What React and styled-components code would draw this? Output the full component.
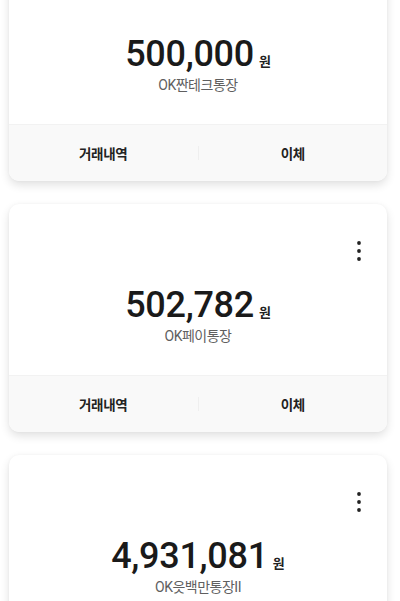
import React from "react";
import styled, { createGlobalStyle } from "styled-components";

const accounts = [
  { amount: "500,000", name: "OK짠테크통장", menu: false },
  { amount: "502,782", name: "OK페이통장", menu: true },
  { amount: "4,931,081", name: "OK읏백만통장II", menu: true },
];

const App = () => {
  return (
    <>
      <GlobalStyle />
      <Page>
        <CardList>
          {accounts.map((acc) => (
            <Card key={acc.name}>
              <CardBody>
                <MenuRow>
                  {acc.menu && (
                    <MenuButton aria-label="더보기">
                      <svg width="6" height="24" viewBox="0 0 6 24">
                        <circle cx="3" cy="4" r="1.9" fill="#222" />
                        <circle cx="3" cy="12" r="1.9" fill="#222" />
                        <circle cx="3" cy="20" r="1.9" fill="#222" />
                      </svg>
                    </MenuButton>
                  )}
                </MenuRow>
                <AmountLine>
                  <Amount>{acc.amount}</Amount>
                  <Won>원</Won>
                </AmountLine>
                <AccountName>{acc.name}</AccountName>
              </CardBody>
              <CardFooter>
                <FooterButton>거래내역</FooterButton>
                <Divider />
                <FooterButton>이체</FooterButton>
              </CardFooter>
            </Card>
          ))}
        </CardList>
      </Page>
    </>
  );
};

export default App;

const GlobalStyle = createGlobalStyle`
  html, body {
    margin: 0;
    padding: 0;
    background: #fff;
    overflow: hidden;
  }
  body {
    font-family: Roboto, "Noto Sans CJK KR", sans-serif;
  }
`;

const Page = styled.div`
  width: 400px;
  height: 601px;
  overflow: hidden;
  background: #fff;
`;

const CardList = styled.div`
  display: flex;
  flex-direction: column;
  gap: 23px;
  margin-top: -47px;
  padding: 0 13px 0 9px;
`;

const Card = styled.div`
  background-color: #fff;
  border-radius: 10px;
  overflow: hidden;
  box-shadow: rgba(0, 0, 0, 0.12) 0px 4px 10px 0px,
    rgba(0, 0, 0, 0.04) 0px 0px 3px 0px;
  flex-shrink: 0;
`;

const CardBody = styled.div`
  height: 171px;
  box-sizing: border-box;
  padding-top: 35px;
  display: flex;
  flex-direction: column;
  align-items: center;
`;

const MenuRow = styled.div`
  width: 100%;
  height: 24px;
  display: flex;
  justify-content: flex-end;
  padding-right: 25px;
  box-sizing: border-box;
`;

const MenuButton = styled.button`
  border: none;
  background: none;
  padding: 0;
  width: 6px;
  height: 24px;
  display: flex;
`;

const AmountLine = styled.div`
  margin-top: 22px;
  display: flex;
  align-items: baseline;
  height: 40px;
`;

const Amount = styled.span`
  font-family: Roboto, sans-serif;
  font-size: 36px;
  line-height: 40px;
  font-weight: 500;
  color: #1a1a1a;
  letter-spacing: -0.3px;
`;

const Won = styled.span`
  font-family: "Noto Sans CJK KR", sans-serif;
  font-size: 13px;
  font-weight: 700;
  color: #222;
  margin-left: 5px;
`;

const AccountName = styled.div`
  margin-top: 2px;
  font-family: Roboto, "Noto Sans CJK KR", sans-serif;
  font-size: 14px;
  line-height: 18px;
  color: #5f5f5f;
  letter-spacing: -0.5px;
`;

const CardFooter = styled.div`
  height: 57px;
  background-color: #f9f9f9;
  border-top: 1px solid #f2f2f2;
  box-sizing: border-box;
  display: flex;
  align-items: center;
`;

const FooterButton = styled.button`
  flex: 1;
  height: 100%;
  border: none;
  background: none;
  font-family: "Noto Sans CJK KR", sans-serif;
  font-size: 13.5px;
  font-weight: 700;
  color: #222;
  letter-spacing: -0.3px;
`;

const Divider = styled.span`
  width: 1px;
  height: 14px;
  background-color: #efefef;
`;
